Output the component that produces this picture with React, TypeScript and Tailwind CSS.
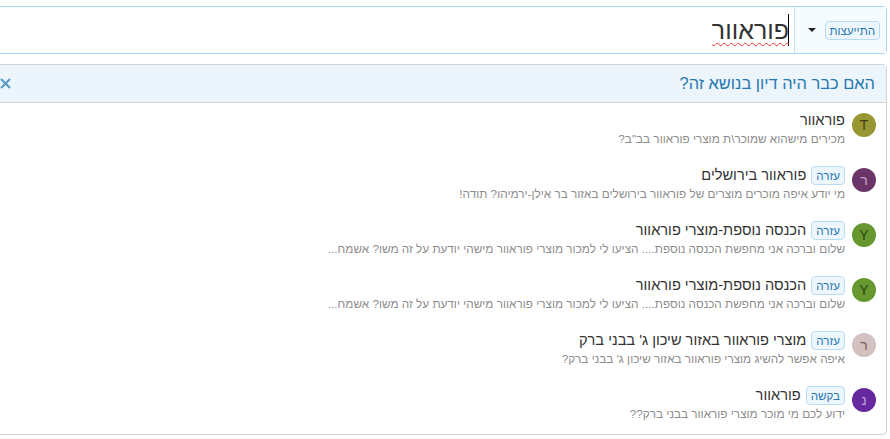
const results = [
  { letter: "T", color: "bg-[#989632]", letterColor: "text-[#3f3f14]", title: "פוראוור", text: 'מכירים מישהוא שמוכר\\ת מוצרי פוראוור בב"ב?' },
  { letter: "ר", color: "bg-[#6b3468]", letterColor: "text-[#c9a0c6]", tag: "עזרה", title: "פוראוור בירושלים", text: "מי יודע איפה מוכרים מוצרים של פוראוור בירושלים באזור בר אילן-ירמיהו? תודה!" },
  { letter: "Y", color: "bg-[#66982f]", letterColor: "text-[#2c4512]", tag: "עזרה", title: "הכנסה נוספת-מוצרי פוראוור", text: "שלום וברכה אני מחפשת הכנסה נוספת.... הציעו לי למכור מוצרי פוראוור מישהי יודעת על זה משו? אשמח..." },
  { letter: "Y", color: "bg-[#66982f]", letterColor: "text-[#2c4512]", tag: "עזרה", title: "הכנסה נוספת-מוצרי פוראוור", text: "שלום וברכה אני מחפשת הכנסה נוספת.... הציעו לי למכור מוצרי פוראוור מישהי יודעת על זה משו? אשמח..." },
  { letter: "ר", color: "bg-[#d3c1c1]", letterColor: "text-[#7a5c5c]", tag: "עזרה", title: "מוצרי פוראוור באזור שיכון ג' בבני ברק", text: "איפה אפשר להשיג מוצרי פוראוור באזור שיכון ג' בבני ברק?" },
  { letter: "נ", color: "bg-[#66289f]", letterColor: "text-[#c3a3e0]", tag: "בקשה", title: "פוראוור", text: "ידוע לכם מי מוכר מוצרי פוראוור בבני ברק??" },
]

function Tag({ label }: { label: string }) {
  return (
    <span className="rounded-[4px] border border-[#b9dcf5] bg-[#eef6fd] px-[4px] text-[11.6px] leading-[17px] text-[#2577b1]">
      {label}
    </span>
  )
}

export default function App() {
  return (
    <div
      dir="rtl"
      className="h-[439px] w-[890px] overflow-hidden bg-white pr-[3px] pt-[6px] font-['Liberation_Sans',sans-serif]"
    >
      {/* Search bar */}
      <div className="flex h-[48px] w-[900px] rounded-[4px] border border-[#a9d5f5] bg-white">
        <div className="flex w-[92px] shrink-0 items-center gap-[9px] border-l border-[#c4e0f5] bg-[#f6fbff] pr-[6px]">
          <Tag label="התייעצות" />
          <span className="h-0 w-0 border-x-[4px] border-t-[4px] border-x-transparent border-t-[#222]" />
        </div>
        <div className="mr-[5px] flex items-center">
          <span className="h-[32px] w-px bg-black" />
          <span className="-mr-px text-[25px] leading-[32px] text-[#333] underline decoration-[#e33] decoration-wavy decoration-1 underline-offset-[3px]">
            פוראוור
          </span>
        </div>
      </div>

      {/* Results panel */}
      <div className="mt-[10px] h-[371px] w-[900px] rounded-[4px] border border-[#d4d4d4]">
        <div className="flex h-[38px] items-center justify-between border-b border-[#d4d4d4] bg-[#edf5fc] px-[11px]">
          <h3 className="text-[16.4px] font-normal text-[#2577b1]">האם כבר היה דיון בנושא זה?</h3>
          <svg width="13" height="13" viewBox="0 0 13 13" className="text-[#5b9bc8]">
            <path d="M2 2 L11 11 M11 2 L2 11" stroke="currentColor" strokeWidth="2.2" fill="none" />
          </svg>
        </div>
        <ul className="flex flex-col gap-[19px] pr-[10px] pt-[8px]">
          {results.map((item, i) => (
            <li key={i} className="flex h-[36px] items-start gap-[7px]">
              <span className={`mt-[2px] flex h-[24px] w-[24px] shrink-0 items-center justify-center rounded-full text-[14px] ${item.color} ${item.letterColor}`}>
                {item.letter}
              </span>
              <div className="min-w-0">
                <div className="flex h-[18px] items-center gap-[5px]">
                  {item.tag && <Tag label={item.tag} />}
                  <span className="text-[14.6px] leading-[18px] text-[#333]">{item.title}</span>
                </div>
                <p className="mt-[2px] text-[11.75px] leading-[16px] text-[#8c8c8c]">{item.text}</p>
              </div>
            </li>
          ))}
        </ul>
      </div>
    </div>
  )
}
